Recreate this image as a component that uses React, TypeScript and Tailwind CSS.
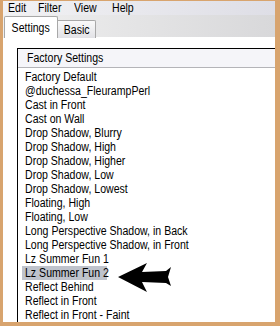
const items = [
  'Factory Default',
  '@duchessa_FleurampPerl',
  'Cast in Front',
  'Cast on Wall',
  'Drop Shadow, Blurry',
  'Drop Shadow, High',
  'Drop Shadow, Higher',
  'Drop Shadow, Low',
  'Drop Shadow, Lowest',
  'Floating, High',
  'Floating, Low',
  'Long Perspective Shadow, in Back',
  'Long Perspective Shadow, in Front',
  'Lz Summer Fun 1',
  'Lz Summer Fun 2',
  'Reflect Behind',
  'Reflect in Front',
  'Reflect in Front - Faint',
];

const SELECTED = 'Lz Summer Fun 2';

const font = { fontFamily: '"Liberation Sans", Arial, sans-serif' };

// narrow look of the old dialog font
const Narrow = ({ children, center }: { children: React.ReactNode; center?: boolean }) => (
  <span className={`inline-block whitespace-nowrap scale-x-[0.88] ${center ? 'origin-center' : 'origin-left'}`}>
    {children}
  </span>
);

export default function App() {
  return (
    <div
      className="relative w-[280px] h-[326px] bg-[#d8a46e] pl-[3px] pr-[5px] pb-[4px] pt-[1px] flex flex-col overflow-hidden text-black text-[12px]"
      style={font}
    >
      <div className="flex-1 flex flex-col bg-white overflow-hidden">
        {/* menu bar */}
        <div className="h-[15px] bg-gradient-to-r from-[#f2f2f4] to-[#dedee6] flex items-start leading-[12px]">
          <div className="flex pl-[5px] pt-px">
            <span className="w-[30px]"><Narrow>Edit</Narrow></span>
            <span className="w-[36px]"><Narrow>Filter</Narrow></span>
            <span className="w-[38px]"><Narrow>View</Narrow></span>
            <span><Narrow>Help</Narrow></span>
          </div>
        </div>

        {/* tab strip */}
        <div className="h-[25px] bg-gradient-to-r from-[#f0f0f0] to-[#d8d8da] flex items-end pl-[1px]">
          <div className="h-[22px] w-[54px] bg-white border border-b-0 border-[#a8a8a8] rounded-t-[2px] flex items-center justify-center">
            <Narrow center>Settings</Narrow>
          </div>
          <div className="h-[18px] w-[38px] bg-gradient-to-b from-[#fafafa] to-[#e2e2e6] border border-b-0 border-l-0 border-[#a8a8a8] rounded-tr-[2px] flex items-center justify-center">
            <Narrow center>Basic</Narrow>
          </div>
          <div className="flex-1 h-px bg-white" />
        </div>

        {/* panel */}
        <div className="flex-1 flex flex-col pl-[14px] pt-[10px]">
          <div className="flex-1 flex flex-col border-l border-t border-black">
            <div className="h-[19px] bg-[#f5f5f9] border-b border-[#b4b4b8] flex items-center pl-[9px]">
              <Narrow>Factory Settings</Narrow>
            </div>
            <div className="flex flex-col pt-[2px]">
              {items.map((it) => (
                <div key={it} className="h-[14px] flex items-center pl-[4px] whitespace-nowrap">
                  {it === SELECTED ? (
                    <span className="w-[85px] h-[14px] pl-[3px] leading-[14px] bg-[#bfc3cc]">
                      <Narrow>{it}</Narrow>
                    </span>
                  ) : (
                    <span className="pl-[3px] leading-[14px]">
                      <Narrow>{it}</Narrow>
                    </span>
                  )}
                </div>
              ))}
            </div>
          </div>
        </div>
      </div>

      {/* arrow */}
      <svg className="absolute left-0 top-0" width="280" height="326" viewBox="0 0 280 326">
        <path d="M118 277 L147 263 L142 272 L166 271 L171 267 L168 277 L171 286 L166 283 L142 282 L147 292 Z" fill="#000" />
      </svg>
    </div>
  );
}
